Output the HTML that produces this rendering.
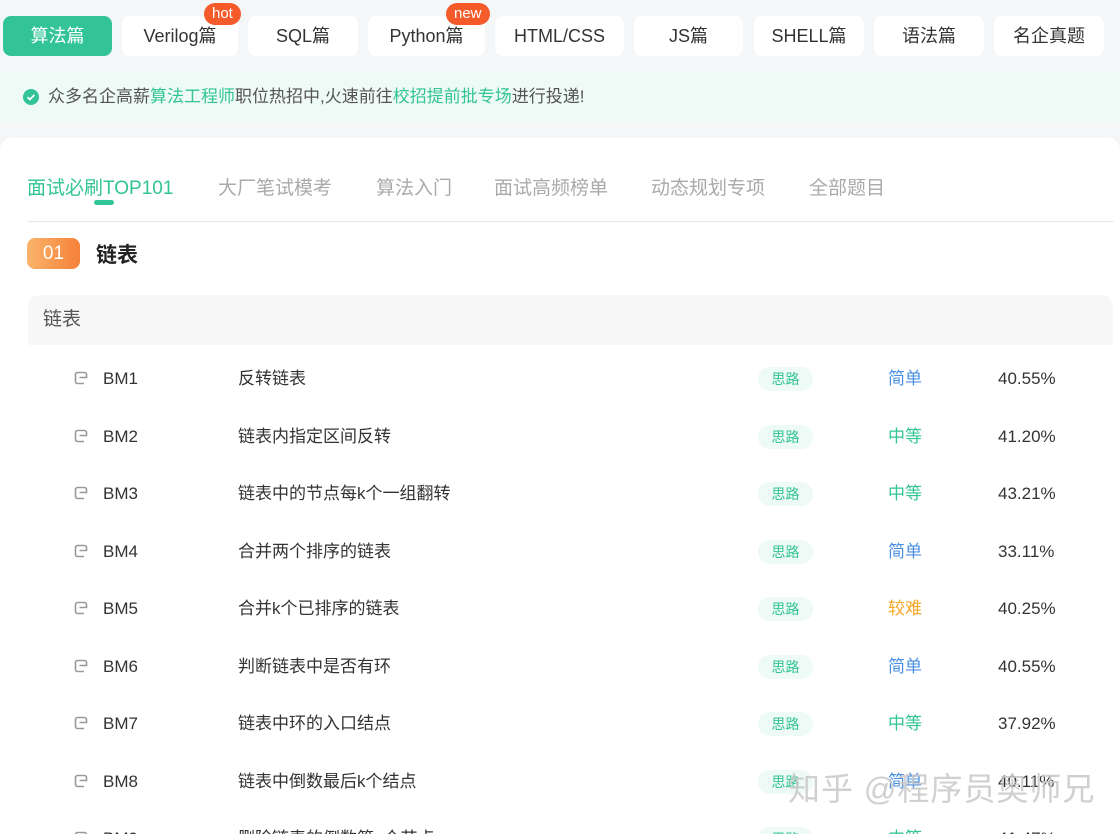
<!DOCTYPE html><html><head><meta charset="utf-8"><style>
*{margin:0;padding:0;box-sizing:border-box}
html,body{width:1120px;height:834px;overflow:hidden}
body{background:#f5f6f8;font-family:"Liberation Sans","Noto Sans CJK SC",sans-serif;color:#333;position:relative}
.tb{position:absolute;top:16px;height:40px;background:#fff;border-radius:8px;font-size:18px;line-height:40px;text-align:center;color:#333}
.tb.on{background:#32c496;color:#fff}
.bd{position:absolute;top:-13px;height:22px;line-height:21px;padding:0 8px;border-radius:11px;background:#f55a2a;color:#fff;font-size:15px}
.ban{position:absolute;left:0;top:72px;width:1120px;height:50px;background:#eefaf6;font-size:17px;line-height:50px;padding-left:48px;color:#555}
.ban b{font-weight:normal;color:#32c496}
.ck{position:absolute;left:23px;top:17px;width:16px;height:16px;border-radius:50%;background:#32c496}
.ck svg{display:block}
.card{position:absolute;left:0;top:138px;width:1120px;height:720px;background:#fff;border-radius:12px}
.nav span{position:absolute;top:35px;font-size:19px;color:#aaa}
.row{position:absolute;left:28px;width:1085px;height:57px;font-size:17px}
.row>span{position:absolute;top:0;height:57px;line-height:57px}
.row>svg{position:absolute;top:21px}
.row>span.tag{left:730px;top:17px;width:55px;height:24px;border-radius:12px;background:#eefaf6;color:#32c496;font-size:14px;line-height:24px;text-align:center}
</style></head><body>
<div class="tb on" style="left:3px;width:109px">算法篇</div>
<div class="tb" style="left:122px;width:116px">Verilog篇<span class="bd" style="left:82px">hot</span></div>
<div class="tb" style="left:248px;width:110px">SQL篇</div>
<div class="tb" style="left:368px;width:117px">Python篇<span class="bd" style="left:78px">new</span></div>
<div class="tb" style="left:495px;width:129px">HTML/CSS</div>
<div class="tb" style="left:634px;width:109px">JS篇</div>
<div class="tb" style="left:754px;width:110px">SHELL篇</div>
<div class="tb" style="left:874px;width:110px">语法篇</div>
<div class="tb" style="left:994px;width:110px">名企真题</div>
<div class="ban"><span class="ck"><svg width="16" height="16"><path d="M4.5 8.2l2.4 2.3 4.5-4.6" stroke="#fff" stroke-width="1.8" fill="none"/></svg></span>众多名企高薪<b>算法工程师</b>职位热招中,火速前往<b>校招提前批专场</b>进行投递!</div>
<div class="card">
<div class="nav"><span style="left:27px;color:#32c496">面试必刷TOP101</span><span style="left:218px">大厂笔试模考</span><span style="left:376px">算法入门</span><span style="left:494px">面试高频榜单</span><span style="left:651px">动态规划专项</span><span style="left:809px">全部题目</span></div>
<div style="position:absolute;left:94px;top:62px;width:20px;height:5px;border-radius:3px;background:#32c496"></div>
<div style="position:absolute;left:27px;top:83px;width:1087px;height:1px;background:#e8e8e8"></div>
<div style="position:absolute;left:27px;top:100px;width:53px;height:31px;border-radius:8px;background:linear-gradient(90deg,#fbb36a,#f5813a);color:#fff;font-size:19px;line-height:31px;text-align:center">01</div>
<div style="position:absolute;left:96px;top:101px;font-size:21px;font-weight:bold;color:#222">链表</div>
<div style="position:absolute;left:28px;top:157px;width:1085px;height:50px;background:#f7f7f7;border-radius:12px 12px 0 0;font-size:19px;line-height:50px;padding-left:15px;color:#555">链表</div>
</div>
<div id="r2" style="position:absolute;left:0;top:0"></div>
<script>
var d=[["BM1","反转链表","简单","40.55%"],["BM2","链表内指定区间反转","中等","41.20%"],["BM3","链表中的节点每k个一组翻转","中等","43.21%"],["BM4","合并两个排序的链表","简单","33.11%"],["BM5","合并k个已排序的链表","较难","40.25%"],["BM6","判断链表中是否有环","简单","40.55%"],["BM7","链表中环的入口结点","中等","37.92%"],["BM8","链表中倒数最后k个结点","简单","40.11%"],["BM9","删除链表的倒数第n个节点","中等","41.47%"]];
var c={"简单":"#4a90e2","中等":"#32c496","较难":"#f5a623"},h="";
d.forEach(function(r,i){h+='<div class="row" style="top:'+(350+i*57.5)+'px"><svg style="left:46px" width="15" height="15"><path d="M10 12.5H3.5a2 2 0 0 1-2-2v-7a2 2 0 0 1 2-2h7a2 2 0 0 1 2 2V6.5H5.5" stroke="#999" stroke-width="1.6" fill="none"/></svg><span style="left:75px">'+r[0]+'</span><span style="left:210px">'+r[1]+'</span><span class="tag">思路</span><span style="left:860px;color:'+c[r[2]]+'">'+r[2]+'</span><span style="left:970px">'+r[3]+'</span></div>'});
document.getElementById("r2").innerHTML=h;
</script>
<div style="position:absolute;left:788px;top:764px;font-size:32px;color:rgba(200,200,200,.85);letter-spacing:1px">知乎 @程序员奥师兄</div>
</body></html>
